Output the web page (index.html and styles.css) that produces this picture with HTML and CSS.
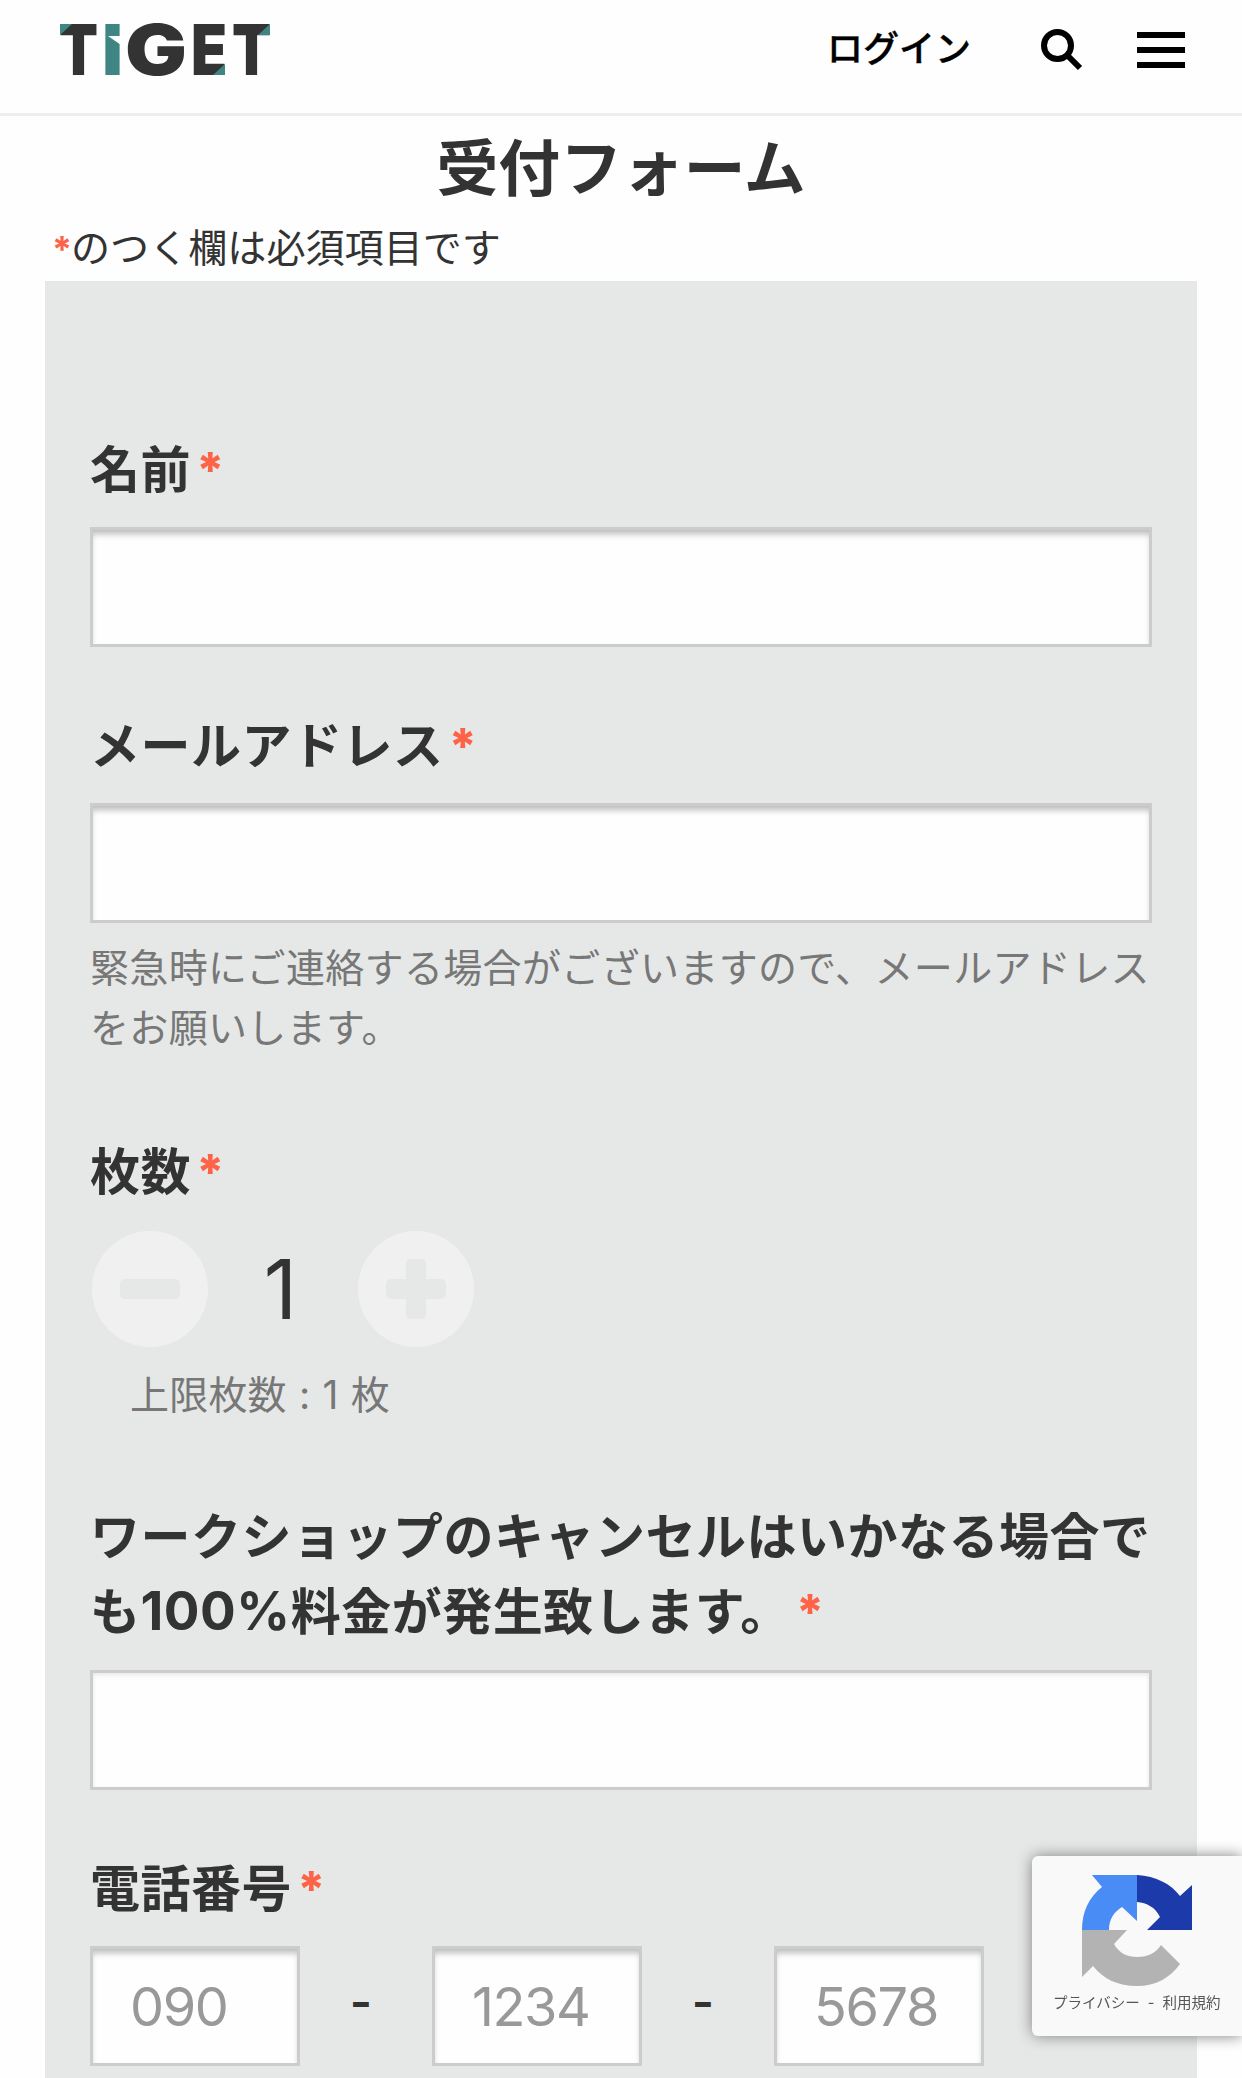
FILE: index.html
```html
<!DOCTYPE html>
<html lang="ja">
  <head>
    <meta charset="UTF-8" />
    <meta name="viewport" content="width=device-width, initial-scale=1.0" />
    <title>受付フォーム | TIGET</title>
    <link rel="stylesheet" href="styles.css" />
  </head>
  <body>
    <header class="header">
      <a class="logo" href="#" aria-label="TIGET">
        <svg width="210" height="54" viewBox="0 0 210 54">
          <g class="logo-text">
            <text x="-1" y="52" textLength="39" lengthAdjust="spacingAndGlyphs">T</text>
            <text class="teal" x="42" y="52" textLength="21" lengthAdjust="spacingAndGlyphs">I</text>
            <text x="65" y="52" textLength="62" lengthAdjust="spacingAndGlyphs">G</text>
            <text x="131" y="52" textLength="36" lengthAdjust="spacingAndGlyphs">E</text>
            <text x="172" y="52" textLength="39" lengthAdjust="spacingAndGlyphs">T</text>
          </g>
          <path class="teal" d="M0 1h12L0 12zM210 1v11h-12zM165 52h-12l12-11z" />
          <path class="notch" d="M48 13h13v9z" />
        </svg>
      </a>
      <nav class="nav">
        <a class="login" href="#">ログイン</a>
        <svg class="search" width="42" height="42" viewBox="0 0 42 42">
          <circle cx="16.5" cy="16.5" r="13.5" />
          <path d="M26 26L39 39" />
        </svg>
        <div class="menu">
          <span></span>
          <span></span>
          <span></span>
        </div>
      </nav>
    </header>

    <main>
      <h1>受付フォーム</h1>
      <p class="note"><span class="mark">*</span>のつく欄は必須項目です</p>

      <form class="panel">
        <div class="field">
          <label for="name">名前<span class="req">*</span></label>
          <input type="text" id="name" />
        </div>

        <div class="field">
          <label for="email">メールアドレス<span class="req">*</span></label>
          <input type="email" id="email" />
          <p class="help">緊急時にご連絡する場合がございますので、メールアドレスをお願いします。</p>
        </div>

        <div class="field field-count">
          <label>枚数<span class="req">*</span></label>
          <div class="counter">
            <button type="button" class="round" aria-label="減らす">
              <svg width="60" height="60" viewBox="0 0 60 60">
                <rect y="20" width="60" height="20" rx="5" />
              </svg>
            </button>
            <span class="count">1</span>
            <button type="button" class="round" aria-label="増やす">
              <svg width="60" height="60" viewBox="0 0 60 60">
                <rect y="20" width="60" height="20" rx="5" />
                <rect x="20" width="20" height="60" rx="5" />
              </svg>
            </button>
          </div>
          <p class="limit">上限枚数 : 1 枚</p>
        </div>

        <div class="field field-agree">
          <label for="agree">ワークショップのキャンセルはいかなる場合でも<span class="num">100%</span>料金が発生致します。<span class="req">*</span></label>
          <input type="text" id="agree" class="plain" />
        </div>

        <div class="field">
          <label for="tel1">電話番号<span class="req">*</span></label>
          <div class="tel">
            <input type="text" id="tel1" placeholder="090" />
            <span class="dash">-</span>
            <input type="text" placeholder="1234" />
            <span class="dash">-</span>
            <input type="text" placeholder="5678" />
          </div>
        </div>
      </form>
    </main>

    <div class="recaptcha">
      <svg width="112" height="114" viewBox="0 0 112 114">
        <path fill="#1c3aa9" d="M56 1C75 2 90 10 99 22L111 11V56H66L79 43C74 33 66 29 56 28z" />
        <path fill="#4a8cf5" d="M56 1H11L21 13C8 23 1 38 1 56H28C28 45 33 38 41 33L56 47z" />
        <path fill="#b3b3b3" d="M1 56H46L33 70C38 79 46 83 56 83C67 83 75 79 80 71L99 90C89 104 75 112 56 112C37 112 22 105 12 92L1 103z" />
      </svg>
      <div class="terms"><a href="#">プライバシー</a><span>-</span><a href="#">利用規約</a></div>
    </div>
  </body>
</html>
```

FILE: styles.css
```css
* {
  box-sizing: border-box;
}

html,
body {
  height: 100%;
}

body {
  margin: 0;
  overflow: hidden;
  background: #fefefe;
  color: #333;
  font-family: Inter, "Noto Sans CJK JP", sans-serif;
}

a {
  color: inherit;
  text-decoration: none;
}

p,
h1 {
  margin: 0;
}

/* header */
.header {
  display: flex;
  justify-content: space-between;
  height: 116px;
  padding: 23px 57px 0 60px;
  border-bottom: 3px solid #eee;
}

.logo svg {
  display: block;
  overflow: visible;
}

.logo-text {
  font-family: Inter, sans-serif;
  font-size: 70px;
  font-weight: 900;
  fill: #333;
}

.teal,
.logo-text .teal {
  fill: #3f8583;
}

.notch {
  fill: #fefefe;
}

.nav {
  display: flex;
  align-items: center;
  height: 54px;
  color: #000;
}

.login {
  margin: -3px 70px 0 0;
  font-size: 36px;
  font-weight: 500;
  line-height: 54px;
  -webkit-text-stroke: 0.4px #000;
}

.search {
  margin-right: 54px;
  fill: none;
  stroke: #000;
  stroke-width: 6;
}

.menu {
  display: flex;
  flex-direction: column;
  gap: 9px;
  width: 48px;
}

.menu span {
  height: 6px;
  background: #000;
}

/* form */
main {
  padding: 8px 45px 0;
}

h1 {
  font-size: 61.8px;
  font-weight: 700;
  line-height: 90px;
  text-align: center;
}

.note {
  padding: 4px 0 0 7px;
  height: 67px;
  font-size: 39.1px;
  line-height: 60px;
}

.mark,
.req {
  color: #ff6347;
}

.mark {
  display: inline-block;
  width: 19px;
  font-size: 36px;
  font-weight: 700;
}

.panel {
  height: 1900px;
  padding: 152px 45px 0;
  background: #e6e8e7;
}

.field {
  margin-bottom: 62px;
}

.field-count {
  margin: 77px 0 75px;
}

label {
  display: block;
  margin-bottom: 19px;
  font-size: 50px;
  font-weight: 700;
  letter-spacing: 0.5px;
  line-height: 75px;
}

.field-agree label {
  margin-bottom: 20px;
}

.num {
  font-size: 53px;
  line-height: 1;
}

.req {
  margin-left: 5px;
  font-size: 49px;
  font-weight: 800;
  line-height: 1;
}

input {
  display: block;
  width: 100%;
  height: 120px;
  padding: 0 37px;
  border: 3px solid #ccc;
  border-radius: 0;
  background: #fefefe;
  box-shadow: inset 0 6px 6px -2px #bbb;
  font-family: inherit;
  font-size: 54px;
}

input.plain {
  box-shadow: inset 0 2px 4px #e8e8e8;
}

input::placeholder {
  color: #999;
  letter-spacing: -1.4px;
}

.help,
.limit {
  color: #777;
  font-size: 39px;
  line-height: 60px;
}

.help {
  margin-top: 15px;
  letter-spacing: 0.34px;
}

.counter {
  display: flex;
  align-items: center;
  padding: 2px;
}

.round {
  display: flex;
  align-items: center;
  justify-content: center;
  width: 116px;
  height: 116px;
  padding: 0;
  border: none;
  border-radius: 50%;
  background: #f0f0f0;
  fill: #e6e8e7;
}

.count {
  width: 150px;
  padding: 2px 5px 0 0;
  font-size: 82px;
  line-height: 114px;
  text-align: center;
}

.limit {
  margin-top: 16px;
  padding-left: 40px;
  letter-spacing: 0.2px;
  word-spacing: 1px;
}

.tel {
  display: flex;
  align-items: center;
}

.tel input {
  width: 210px;
}

.dash {
  width: 132px;
  padding: 0 10px 10px 0;
  font-size: 48px;
  font-weight: 600;
  text-align: center;
}

/* badge in the bottom right corner */
.recaptcha {
  position: fixed;
  right: 0;
  bottom: 42px;
  width: 210px;
  height: 180px;
  padding-top: 18px;
  border-radius: 6px 0 0 6px;
  background: #f9f9f9;
  box-shadow: 0 0 15px gray;
}

.recaptcha svg {
  display: block;
  margin-left: 49px;
}

.terms {
  display: flex;
  gap: 8px;
  margin: 4px 0 0 21px;
  color: #555;
  font-size: 14.5px;
  line-height: 22px;
}
```
